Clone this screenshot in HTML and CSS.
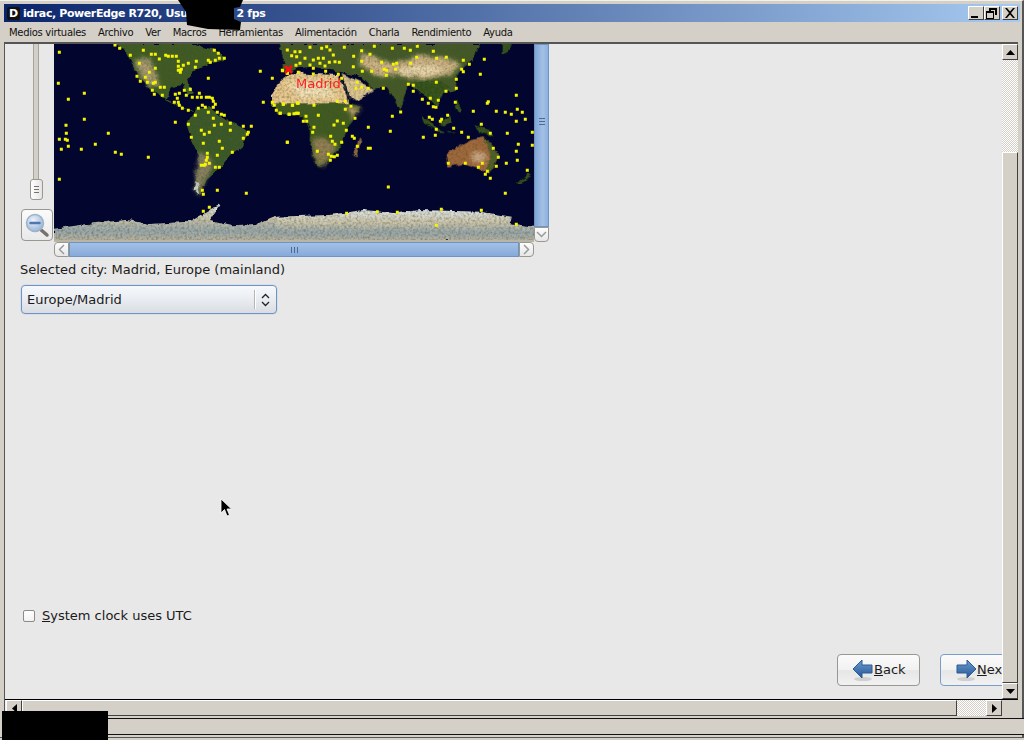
FILE: index.html
```html
<!DOCTYPE html>
<html lang="es">
<head>
<meta charset="utf-8">
<title>idrac</title>
<link rel="stylesheet" href="styles.css">
</head>
<body>
<div class="window">
  <header class="titlebar">
    <span class="app-icon">D</span>
    <span class="title-text">idrac, PowerEdge R720, Usu<span class="title-gap"></span>2 fps</span>
    <div class="win-buttons">
      <button class="win-btn"><svg width="12" height="10" viewBox="0 0 12 10"><path d="M1 8h7v2H1z"/></svg></button>
      <button class="win-btn"><svg width="12" height="11" viewBox="0 0 12 11"><path d="M3 0h8v7H9V2H5v1H3zM0 3h8v8H0zM1 5v5h6V5z" fill-rule="evenodd"/></svg></button>
      <button class="win-btn win-close"><svg width="12" height="10" viewBox="0 0 12 10"><path d="M1 0h2l3 3.500L9 0h2L7 5l4 5H9L6 6.500 3 10H1l4-5z"/></svg></button>
    </div>
  </header>
  <nav class="menubar">
    <span>Medios virtuales</span><span>Archivo</span><span>Ver</span><span>Macros</span><span>Herramientas</span><span>Alimentación</span><span>Charla</span><span>Rendimiento</span><span>Ayuda</span>
  </nav>
  <main class="viewport">
    <div class="view-row">
      <section class="pane">
        <div class="map-row">
          <div class="zoom-col">
            <div class="slider"><div class="slider-track"></div><div class="slider-thumb"><i></i><i></i><i></i></div></div>
            <button class="zoom-btn">
              <svg width="26" height="26" viewBox="0 0 26 26">
                <defs><radialGradient id="lens" cx=".4" cy=".35" r=".8"><stop offset="0" stop-color="#eef4fb"/><stop offset="1" stop-color="#86a8d4"/></radialGradient></defs>
                <path d="M16 17l7 6" stroke="#77736c" stroke-width="3.500" stroke-linecap="round"/>
                <circle cx="11" cy="11" r="8.500" fill="url(#lens)" stroke="#9fb2c8" stroke-width="1.500"/>
                <path d="M6.500 11h9" stroke="#4f76ad" stroke-width="2.500" stroke-linecap="round"/>
              </svg>
            </button>
          </div>
          <div class="map-col">
            <div class="map-top">
              <div class="map">
                <svg width="480" height="196" viewBox="0 0 480 196">
                  <defs>
                    <filter id="tex" x="0" y="0" width="100%" height="100%"><feTurbulence type="fractalNoise" baseFrequency=".12" numOctaves="3" seed="7" result="w"/><feDisplacementMap in="SourceGraphic" in2="w" scale="5" xChannelSelector="R" yChannelSelector="G" result="shape"/><feTurbulence type="fractalNoise" baseFrequency=".42" numOctaves="2" seed="4" result="n"/><feColorMatrix in="n" type="matrix" values="0 0 0 0 .08 0 0 0 0 .1 0 0 0 0 .02 1.300 0 0 0 -.5" result="d"/><feComposite in="d" in2="shape" operator="in" result="t"/><feMerge><feMergeNode in="shape"/><feMergeNode in="t"/></feMerge></filter>
                    <filter id="soft" x="-20%" y="-20%" width="140%" height="140%"><feGaussianBlur stdDeviation="7"/></filter>
                    <linearGradient id="ice" x1="0" y1="0" x2="0" y2="1"><stop offset="0" stop-color="#dfe4e2"/><stop offset=".4" stop-color="#c9c3aa"/><stop offset=".72" stop-color="#98a6aa"/><stop offset="1" stop-color="#b8b3a0"/></linearGradient>
                  </defs>
                  <rect width="480" height="196" fill="#02062e"/>
                  <g filter="url(#tex)">
                    <g transform="translate(-4 -4) scale(.3333)">
                      <path fill="#3d5a26" d="M190 12H420L500 30 525 60 480 72 440 85 412 122 432 160 415 165 400 135 365 140 345 180 395 205 422 210 432 218 385 195 335 172 300 145 265 110 240 60 225 30z"/>
                      <path fill="#a89a72" filter="url(#soft)" d="M250 60L300 55 320 110 330 135 300 140 270 105z"/>
                      <path fill="#39582a" d="M410 255L440 205 480 205 540 245 597 272 575 320 540 345 510 385 470 420 450 465 435 450 440 400 450 350 425 300z"/>
                      <path fill="#8a8164" filter="url(#soft)" d="M450 340L475 345 490 375 465 420 450 465 435 450 438 400z"/>
                      <path fill="#c8ccc8" d="M440 425L450 428 445 462 434 450z"/>
                      <path fill="#1f7f90" d="M416 142h10v10h-10z"/>
                      <path fill="#e8c88f" d="M665 165L690 125 720 105 760 95V195H668z"/>
                      <path fill="#3d5a23" d="M665 188H760V225H700z"/>
                      <path fill="#3a5a24" d="M695 72h28v20h-28zM690 25l25-13 20 2-10 25-25 2z"/>
                      <path fill="url(#ice)" d="M12 566L130 550 230 540 300 552 420 545 480 510 510 492 480 540 550 556 620 552 670 530 750 540V604H12z"/>
                    </g>
                    <g transform="translate(226 -4) scale(.3333)">
                      <path fill="#42592a" d="M0 12H600L575 60 545 85 530 115 527 150 490 158 470 200 450 178 425 160 385 130 362 210 340 170 320 140 282 150 245 112 180 95 100 80 50 85 20 100 10 60z"/>
                      <path fill="#cdb384" filter="url(#soft)" d="M245 35L300 60 350 70 420 45 500 55 540 70 520 100 440 120 340 105 300 110 240 75z"/>
                      <path fill="#e9d6ac" filter="url(#soft)" d="M350 85L430 75 500 85 440 105 370 105z"/>
                      <path fill="#2f4f1e" d="M400 125L480 125 510 140 480 160 470 195 450 175 420 160zM665 12h30l-15 28-15 3z"/>
                      <path fill="#e8c88f" d="M-10 135L30 100 175 105 200 165 205 195 100 195-10 195z"/>
                      <path fill="#f3e0b4" filter="url(#soft)" d="M20 130L130 120 170 170 60 175z"/>
                      <path fill="#3d5a23" d="M-10 190H210L245 200 200 260 190 310 130 380 110 380 90 310 90 260 60 225H-10z"/>
                      <path fill="#937f55" filter="url(#soft)" d="M95 300L130 290 170 320 130 378 112 375z"/>
                      <path fill="#b99a69" filter="url(#soft)" d="M195 205L245 200 215 235z"/>
                      <path fill="#dcc492" d="M185 100L240 125 282 150 230 185 205 165z"/>
                      <path fill="#02062e" d="M185 105L215 175 207 180 178 115z"/>
                      <path fill="#8f6b45" d="M218 345L238 295 243 305 230 348z"/>
                      <path fill="#32501e" d="M425 225L470 265 510 280 530 278 470 275 435 250zM480 250L510 225 515 250 490 260zM527 180l18 30-10 10-10-20zM580 255l50 15 10 20-30-10-15-5zM710 430l35-30 8 5-30 25z"/>
                      <path fill="#a1683e" d="M497 345L520 328 570 300 610 292 640 322 655 350 630 400 600 388 550 372 505 380z"/>
                      <path fill="#4f5f2a" d="M610 292l30 30 15 28-25 50-12-12 15-50z"/>
                      <path fill="#cba683" filter="url(#soft)" d="M575 335h35l10 30-40 5z"/>
                      <path fill="url(#ice)" d="M-10 530L150 525 250 510 350 520 420 510 600 515 695 530 690 550 770 562V604H-10z"/>
                    </g>
                  </g>
                  <g class="cities" transform="translate(-4 -4) scale(.3333)">
                    <path d="M28 37h0M25 130h0M103 160h0M55 178h0M103 238h0M48 256h0M49 280h0M28 298h0M46 298h0M52 301h0M34 328h0M55 319h0M94 328h0M136 313h0M175 280h0M196 337h0M214 343h0M295 352h0M28 418h0M195 15h0M209 25h0M241 46h0M280 31h0M304 43h0M316 43h0M328 57h0M268 70h0M347 46h0M355 49h0M367 49h0M379 49h0M493 31h0M505 40h0M508 55h0M523 55h0M496 61h0M481 67h0M475 61h0M439 64h0M415 70h0M400 76h0M385 64h0M385 79h0M385 91h0M391 97h0M394 88h0M436 82h0M316 85h0M298 97h0M286 112h0M261 109h0M271 124h0M292 127h0M310 130h0M316 127h0M331 142h0M343 142h0M307 151h0M313 163h0M337 166h0M376 163h0M388 160h0M403 151h0M421 148h0M475 115h0M631 94h0M667 115h0M697 91h0M712 100h0M382 175h0M409 166h0M427 172h0M448 160h0M442 172h0M454 172h0M469 172h0M478 172h0M487 175h0M490 184h0M496 193h0M490 202h0M475 217h0M457 196h0M466 202h0M445 205h0M373 187h0M385 187h0M388 196h0M397 205h0M415 211h0M436 226h0M376 247h0M490 235h0M502 217h0M514 223h0M523 226h0M541 250h0M493 256h0M514 253h0M580 259h0M604 259h0M595 277h0M592 283h0M580 295h0M541 271h0M478 277h0M454 271h0M463 283h0M415 253h0M424 292h0M508 304h0M460 310h0M517 325h0M547 337h0M502 346h0M472 340h0M472 352h0M469 361h0M466 373h0M478 370h0M454 376h0M463 376h0M496 382h0M508 382h0M457 451h0M460 463h0M502 451h0M589 460h0M478 502h0M460 514h0M640 187h0M712 307h0M667 187h0M673 196h0M679 211h0M691 220h0M700 193h0M718 223h0M727 196h0M739 220h0M745 190h0M745 220h0"/>
                  </g>
                  <g class="cities" transform="translate(226 -4) scale(.3333)">
                    <path d="M22 30h0M45 35h0M60 35h0M90 22h0M125 25h0M140 20h0M150 30h0M193 22h0M245 32h0M283 19h0M337 25h0M373 25h0M391 31h0M412 19h0M460 34h0M270 43h0M221 49h0M35 47h0M50 50h0M75 55h0M100 60h0M115 55h0M130 55h0M160 45h0M165 65h0M148 67h0M120 70h0M90 75h0M60 70h0M135 78h0M100 85h0M48 76h0M8 92h0M22 100h0M55 97h0M100 102h0M137 94h0M178 67h0M220 80h0M245 64h0M247 94h0M275 94h0M305 67h0M340 73h0M350 70h0M392 70h0M410 52h0M470 55h0M499 52h0M550 61h0M568 73h0M613 58h0M545 88h0M550 95h0M601 103h0M312 88h0M320 91h0M347 88h0M319 106h0M175 103h0M185 115h0M232 127h0M228 145h0M245 142h0M265 145h0M310 145h0M385 133h0M400 136h0M469 127h0M529 118h0M529 145h0M498 154h0M400 154h0M427 178h0M451 175h0M475 181h0M445 190h0M460 200h0M468 202h0M526 187h0M625 185h0M622 190h0M709 166h0M172 184h0M196 184h0M213 199h0M196 208h0M10 193h0M38 196h0M52 190h0M102 196h0M0 220h0M27 223h0M42 221h0M52 220h0M78 229h0M115 226h0M225 235h0M70 244h0M80 244h0M172 243h0M162 255h0M190 250h0M102 262h0M199 271h0M98 277h0M152 289h0M157 304h0M165 313h0M185 307h0M22 307h0M112 334h0M145 343h0M154 349h0M172 346h0M163 350h0M151 361h0M217 289h0M223 295h0M232 319h0M265 262h0M331 274h0M337 229h0M362 216h0M430 292h0M265 325h0M271 325h0M325 441h0M200 520h0M292 515h0M352 517h0M484 508h0M604 511h0M469 556h0M709 553h0M676 460h0M580 214h0M649 214h0M676 217h0M694 223h0M712 208h0M727 217h0M736 238h0M709 244h0M604 253h0M682 280h0M757 277h0M631 280h0M565 292h0M545 277h0M521 265h0M466 286h0M469 268h0M448 232h0M457 238h0M481 244h0M485 238h0M503 226h0M640 325h0M655 352h0M715 313h0M709 334h0M757 316h0M712 361h0M679 370h0M505 370h0M556 370h0M607 370h0M595 382h0M649 379h0M622 394h0M616 403h0M631 415h0M742 391h0"/>
                  </g>
                  <path d="M231 22l7 7m0-7l-7 7" stroke="#ff1010" stroke-width="2.500" fill="none"/>
                  <text class="map-label" x="242" y="44">Madrid</text>
                </svg>
              </div>
              <div class="vbar">
                <div class="vbar-thumb"><i></i><i></i><i></i></div>
                <div class="end-btn end-down"><svg width="11" height="7" viewBox="0 0 11 7"><path d="M1 1l4.500 4.500L10 1" fill="none" stroke="#9a9a9a" stroke-width="1.500"/></svg></div>
              </div>
            </div>
            <div class="hbar">
              <div class="end-btn end-left"><svg width="7" height="11" viewBox="0 0 7 11"><path d="M6 1L1.500 5.500 6 10" fill="none" stroke="#9a9a9a" stroke-width="1.500"/></svg></div>
              <div class="hbar-thumb"><i></i><i></i><i></i></div>
              <div class="end-btn end-right"><svg width="7" height="11" viewBox="0 0 7 11"><path d="M1 1l4.500 4.500L1 10" fill="none" stroke="#9a9a9a" stroke-width="1.500"/></svg></div>
            </div>
          </div>
        </div>
        <p class="city-label">Selected city: Madrid, Europe (mainland)</p>
        <div class="combo">
          <span class="combo-text">Europe/Madrid</span>
          <span class="combo-arrows"><svg width="9" height="14" viewBox="0 0 9 14"><path d="M1 5l3.500-3.500L8 5M1 9l3.500 3.500L8 9" fill="none" stroke="#222" stroke-width="1.300"/></svg></span>
        </div>
        <label class="utc"><span class="checkbox"></span><span><u>S</u>ystem clock uses UTC</span></label>
        <div class="actions">
          <button class="nav-btn">
            <svg width="22" height="24" viewBox="0 0 22 24"><defs><linearGradient id="ar" x1="0" y1="0" x2="0" y2="1"><stop offset="0" stop-color="#6f9bcb"/><stop offset="1" stop-color="#23579a"/></linearGradient></defs><ellipse cx="11" cy="21" rx="9" ry="2" fill="#cfcfcf"/><path d="M1 11L10 2v5h10v8H10v5z" fill="url(#ar)" stroke="#2c5a94"/></svg>
            <span class="nav-label"><u>B</u>ack</span>
          </button>
          <button class="nav-btn nav-default">
            <svg width="22" height="24" viewBox="0 0 22 24"><ellipse cx="11" cy="21" rx="9" ry="2" fill="#cfcfcf"/><path d="M21 11L12 2v5H2v8h10v5z" fill="url(#ar)" stroke="#2c5a94"/></svg>
            <span class="nav-label"><u>N</u>ext</span>
          </button>
        </div>
      </section>
      <aside class="scroll-v">
        <div class="arrow-btn"><svg width="9" height="5" viewBox="0 0 9 5"><path d="M4.500 0L9 5H0z"/></svg></div>
        <div class="trough"></div>
        <div class="scroll-v-thumb"></div>
        <div class="arrow-btn"><svg width="9" height="5" viewBox="0 0 9 5"><path d="M0 0h9L4.500 5z"/></svg></div>
      </aside>
    </div>
    <div class="scroll-h">
      <div class="arrow-btn"><svg width="5" height="9" viewBox="0 0 5 9"><path d="M5 0v9L0 4.500z"/></svg></div>
      <div class="scroll-h-thumb"></div>
      <div class="trough"></div>
      <div class="arrow-btn"><svg width="5" height="9" viewBox="0 0 5 9"><path d="M0 0l5 4.500L0 9z"/></svg></div>
    </div>
  </main>
  <footer class="statusbar"></footer>
</div>
<svg class="redact redact-top" width="66" height="31" viewBox="0 0 66 31"><path d="M0 0H65L62 7 56 8V19L63 22 62 30 30 29 9 25 8 12z"/></svg>
<div class="redact redact-bottom"></div>
<svg class="cursor" width="12" height="19" viewBox="0 0 12 19"><path d="M1 1v14l3.500-3.500L7 18l2.500-1L7 11h4.500z" fill="#000" stroke="#fff" stroke-width=".8"/></svg>
</body>
</html>
```
FILE: styles.css
```css
* { box-sizing: border-box; }
html, body { margin: 0; height: 100%; overflow: hidden; }
body { position: relative; width: 1024px; height: 740px; background: #d4d0c8; font-family: "DejaVu Sans", sans-serif; color: #1a1a1a; }
button { font: inherit; color: inherit; margin: 0; padding: 0; }

.window { height: 738px; display: flex; flex-direction: column; padding: 4px 4px 2px 4px; border-top: 1px solid #f2f0ea; border-bottom: 1px solid #555; border-right: 2px solid #555; }
.titlebar { height: 18px; flex: none; margin-top: -1px; margin-right: -2px; display: flex; align-items: center; padding-left: 3px; background: linear-gradient(90deg, #0a246a, #a6caf0); color: #fff; font-size: 11px; font-weight: 700; letter-spacing: -.4px; white-space: nowrap; }
.app-icon { width: 13px; height: 13px; flex: none; background: #111; color: #fff; border-radius: 2px; font-size: 11px; font-weight: 700; letter-spacing: 0; line-height: 13px; text-align: center; margin-right: 3px; }
.title-text { flex: 1; }
.title-gap { display: inline-block; width: 49px; }
.win-buttons { display: flex; align-items: center; padding-right: 2px; }
.win-btn { width: 16px; height: 14px; display: flex; align-items: center; justify-content: center; background: #d4d0c8; border: 1px solid; border-color: #fff #404040 #404040 #fff; }
.win-btn svg { fill: #000; display: block; }
.win-close { margin-left: 2px; }

.menubar { height: 20px; flex: none; display: flex; align-items: center; gap: 12px; padding-left: 5px; font-family: "DejaVu Sans", sans-serif; font-size: 10px; letter-spacing: -.3px; color: #111; white-space: nowrap; }

.viewport { flex: 1; min-height: 0; display: flex; flex-direction: column; border-top: 2px solid #555; border-left: 1px solid #555; box-shadow: inset 1px 0 0 #f0f0f0; }
.view-row { flex: 1; min-height: 0; display: flex; }
.pane { flex: 1; min-width: 0; overflow: hidden; background: #e8e8e8; display: flex; flex-direction: column; padding-left: 16px; }

.map-row { display: flex; flex: none; height: 213px; }
.zoom-col { width: 33px; flex: none; display: flex; flex-direction: column; }
.slider { height: 157px; flex: none; position: relative; }
.slider-track { position: absolute; left: 12px; top: 0; width: 6px; height: 138px; background: #d2cfc9; border: 1px solid #a8a49c; border-width: 0 1px; }
.slider-thumb { position: absolute; left: 9px; top: 135px; width: 13px; height: 21px; background: linear-gradient(90deg, #fff, #e4e4e4); border: 1px solid #9a9690; border-radius: 3px; display: flex; flex-direction: column; justify-content: center; align-items: center; gap: 2px; }
.slider-thumb i { display: block; width: 5px; height: 1px; background: #77736c; }
.zoom-btn { width: 32px; height: 32px; margin-top: 8px; display: flex; align-items: center; justify-content: center; background: linear-gradient(#fbfbfb, #e9e9e9); border: 1px solid #9a9690; border-radius: 4px; }
.zoom-btn svg { display: block; }

.map-col { width: 495px; flex: none; display: flex; flex-direction: column; }
.map-top { display: flex; height: 198px; flex: none; }
.map { width: 480px; height: 198px; flex: none; background: #b8b5a5; overflow: hidden; }
.map svg { display: block; }
.cities path { fill: none; stroke: #f5f500; stroke-width: 9; stroke-linecap: square; }
.map-label { font-family: "DejaVu Sans", sans-serif; font-size: 13px; fill: #ff2020; }

.vbar { width: 15px; flex: none; display: flex; flex-direction: column; }
.vbar-thumb { flex: 1; padding-bottom: 28px; background: linear-gradient(90deg, #7fa6d8, #a3c1e6 60%, #8eb0dc); border: 1px solid #6f93c2; display: flex; flex-direction: column; align-items: center; justify-content: center; gap: 2px; }
.vbar-thumb i { display: block; width: 6px; height: 1px; background: #4d6a96; }
.hbar { height: 15px; width: 480px; display: flex; flex: none; }
.hbar-thumb { flex: 1; background: linear-gradient(#a3c1e6, #86aad9); border: 1px solid #6f93c2; display: flex; align-items: center; justify-content: center; gap: 2px; }
.hbar-thumb i { display: block; width: 1px; height: 6px; background: #4d6a96; }
.end-btn { flex: none; background: linear-gradient(#fdfdfd, #e6e6e6); border: 1px solid #9a9690; display: flex; align-items: center; justify-content: center; }
.end-btn svg { display: block; }
.end-down { height: 15px; border-radius: 0 0 4px 4px; }
.end-left { width: 15px; border-radius: 4px 0 0 4px; }
.end-right { width: 15px; border-radius: 0 4px 4px 0; }

.city-label { margin: 5px 0 0 -1px; font-size: 13px; line-height: 16px; height: 16px; white-space: nowrap; }
.combo { margin-top: 7px; width: 256px; height: 29px; flex: none; display: flex; align-items: center; background: linear-gradient(#f6f8fb 0%, #e9edf2 50%, #d9dde2 100%); border: 1px solid #6f93c2; border-radius: 4px; box-shadow: 0 0 0 .5px #c7d5e8; font-size: 13px; }
.combo-text { flex: 1; padding-left: 5px; }
.combo-arrows { width: 22px; height: 19px; border-left: 1px solid #b5b5b5; display: flex; align-items: center; justify-content: center; box-shadow: inset 1px 0 0 #fff; }
.combo-arrows svg { display: block; }

.utc { margin-top: auto; margin-left: 2px; display: flex; align-items: center; gap: 7px; font-size: 13px; line-height: 16px; white-space: nowrap; }
.checkbox { width: 12px; height: 12px; flex: none; background: linear-gradient(#fff, #f2f2f2); border: 1px solid #8e8a84; border-radius: 2px; }

.actions { display: flex; gap: 20px; margin-top: 30px; margin-bottom: 13px; padding-left: 816px; flex: none; }
.nav-btn { width: 83px; height: 32px; flex: none; display: flex; align-items: center; padding-left: 14px; background: linear-gradient(#fbfbfb 0, #f1f1f1 50%, #e6e6e6 52%, #f1f1f1 100%); border: 1px solid #9a9690; border-radius: 4px; font-size: 13px; white-space: nowrap; }
.nav-btn svg { display: block; flex: none; }
.nav-label { padding-bottom: 2px; }
.nav-default { border-color: #7a9ccc; }

.scroll-v { width: 16px; flex: none; display: flex; flex-direction: column; }
.trough { background: repeating-conic-gradient(#d4d0c8 0 25%, #fff 0 50%) 0 0 / 2px 2px; }
.scroll-v .trough { height: 92px; flex: none; }
.scroll-v-thumb { flex: 1; background: #d4d0c8; border: 1px solid; border-color: #fff #404040 #404040 #fff; }
.arrow-btn { width: 16px; height: 16px; flex: none; display: flex; align-items: center; justify-content: center; background: #d4d0c8; border: 1px solid; border-color: #fff #404040 #404040 #fff; }
.arrow-btn svg { display: block; fill: #000; }

.scroll-h { height: 17px; flex: none; display: flex; padding: 0 16px 0 1px; border-top: 1px solid #000; }
.scroll-h .arrow-btn { height: 16px; }
.scroll-h-thumb { flex: 1; background: #d4d0c8; border: 1px solid; border-color: #fff #404040 #404040 #fff; }
.scroll-h .trough { width: 29px; flex: none; }

.statusbar { height: 17px; flex: none; margin: 2px -6px 0 1px; background: #d4d0c8; border-top: 1px solid #111; border-bottom: 1px solid #111; }

.redact { position: absolute; }
.redact-top { left: 178px; top: 0; fill: #000; }
.redact-bottom { left: 2px; top: 711px; width: 106px; height: 29px; background: #000; }
.cursor { position: absolute; left: 220px; top: 498px; }
```
